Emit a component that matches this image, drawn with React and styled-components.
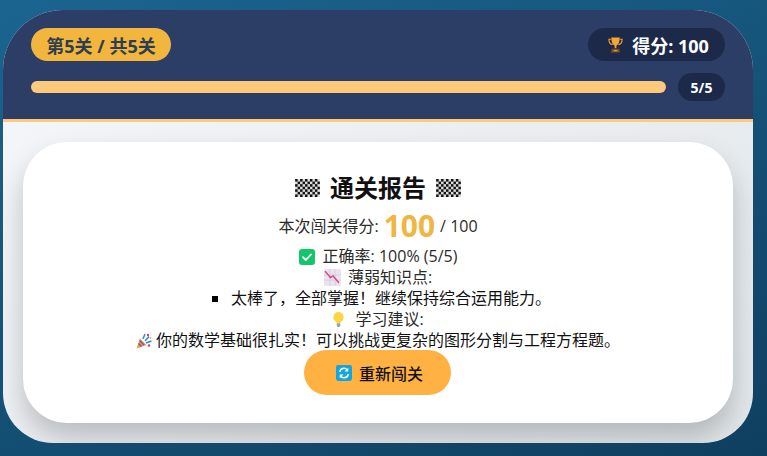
import React from 'react';
import styled, { createGlobalStyle } from 'styled-components';

const GlobalStyle = createGlobalStyle`
  html, body {
    margin: 0;
    padding: 0;
    height: 456px;
    overflow: hidden;
  }
  body {
    background: linear-gradient(160deg, #1a6590 0%, #0f3f60 100%);
    font-family: 'Open Sans', 'Noto Sans CJK SC', sans-serif;
  }
`;

const Page = styled.div`
  height: 456px;
  padding: 10px 14px 13px 3px;
  box-sizing: border-box;
`;

const Panel = styled.div`
  width: 750px;
  height: 433px;
  border-radius: 60px 60px 50px 50px;
  overflow: hidden;
  display: flex;
  flex-direction: column;
  background: linear-gradient(135deg, #f5f7fa 0%, #e2e7ea 100%);
`;

const Header = styled.header`
  flex: none;
  padding: 18px 28px 0;
  height: 91px;
  background: #2c3e66;
  border-bottom: 3px solid #fdc97a;
  display: flex;
  flex-direction: column;
`;

const TopRow = styled.div`
  display: flex;
  justify-content: space-between;
  align-items: center;
  height: 33px;
`;

const LevelBadge = styled.div`
  height: 33px;
  width: 140px;
  border-radius: 17px;
  background: #f2b63f;
  color: #2c3e50;
  font-size: 18px;
  font-weight: 700;
  display: flex;
  align-items: center;
  justify-content: center;
`;

const ScoreBadge = styled.div`
  height: 33px;
  width: 137px;
  box-sizing: border-box;
  padding-left: 4px;
  border-radius: 17px;
  background: #1c2949;
  color: #fff;
  font-size: 18px;
  font-weight: 700;
  display: flex;
  align-items: center;
  justify-content: center;
  gap: 9px;
`;

const ProgressRow = styled.div`
  display: flex;
  align-items: center;
  gap: 12px;
  margin-top: 12px;
`;

const Track = styled.div`
  flex: 1;
  height: 12px;
  border-radius: 6px;
  background: #fdc97a;
`;

const Count = styled.div`
  width: 47px;
  height: 28px;
  border-radius: 14px;
  background: #1c2949;
  color: #fff;
  font-size: 14px;
  font-weight: 700;
  display: flex;
  align-items: center;
  justify-content: center;
`;

const Body = styled.main`
  flex: 1;
  padding: 20px;
  min-height: 0;
`;

const Card = styled.section`
  height: 281px;
  box-sizing: border-box;
  border-radius: 44px;
  background: #fff;
  box-shadow: 0 16px 28px rgba(0, 0, 0, 0.21);
  padding: 28px 20px 0;
  display: flex;
  flex-direction: column;
  align-items: center;
  color: #2b2b2b;
  font-size: 16px;
  line-height: 21px;
`;

const Title = styled.h2`
  margin: 0;
  height: 36px;
  font-size: 24px;
  line-height: 36px;
  font-weight: 700;
  color: #111;
  display: flex;
  align-items: center;
  gap: 10px;
`;

const ScoreLine = styled.div`
  height: 38px;
  display: flex;
  align-items: center;
  gap: 5px;
  margin: 1px 0;
`;

const BigScore = styled.span`
  font-size: 30px;
  font-weight: 700;
  color: #f0b542;
  line-height: 38px;
`;

const Line = styled.div`
  height: 21px;
  display: flex;
  align-items: center;
  justify-content: center;
  gap: ${p => p.$gap ?? 7}px;
  color: ${p => p.$dark ? '#111' : 'inherit'};
`;

const Bullet = styled.span`
  width: 6px;
  height: 6px;
  background: #000;
  margin: 0 13px 0 7px;
`;

const RetryButton = styled.button`
  margin: -1px 0 0 -1px;
  width: 147px;
  height: 45px;
  flex: none;
  border: none;
  border-radius: 23px;
  background: #ffb142;
  color: #111;
  font-family: inherit;
  font-size: 16px;
  font-weight: 500;
  display: flex;
  align-items: center;
  justify-content: center;
  gap: 7px;
  padding: 0 0 0 4px;
`;

const Flag = () => {
  const cells = [];
  for (let r = 0; r < 7; r++) {
    for (let c = 0; c < 10; c++) {
      if ((r + c) % 2 === 0) cells.push(<rect key={`${r}-${c}`} x={c * 2.5} y={r * 2.6} width="2.5" height="2.6" fill="#111" />);
    }
  }
  return (
    <svg width="25" height="18" viewBox="0 0 25 18.200">
      <rect width="25" height="18.200" fill="#ddd" />
      {cells}
    </svg>
  );
};

const Trophy = () => (
  <svg width="15" height="18" viewBox="0 0 16 18">
    <path d="M3 3H1c0 3 1 5 4 5.500M13 3h2c0 3-1 5-4 5.500" fill="none" stroke="#e8952a" strokeWidth="1.300" />
    <path d="M3.500 1h9c0 5-1.500 7.500-3.500 8.500v3H7v-3C5 8.500 3.500 6 3.500 1z" fill="#f4a62e" />
    <path d="M4 13h8l1 4H3z" fill="#7b4a26" />
    <rect x="6" y="14.500" width="4" height="1.200" fill="#e8b04a" />
  </svg>
);

const CheckBox = () => (
  <svg width="16" height="16" viewBox="0 0 16 16">
    <rect width="16" height="16" rx="3" fill="#12c76b" />
    <path d="M4 8.200l2.800 2.800L12 5.500" fill="none" stroke="#fff" strokeWidth="1.800" strokeLinecap="round" strokeLinejoin="round" />
  </svg>
);

const ChartDown = () => (
  <svg width="17" height="17" viewBox="0 0 16 16">
    <rect width="16" height="16" rx="1.500" fill="#e9e2ef" />
    <path d="M0 5.500h16M0 10.500h16M5.500 0v16M10.500 0v16" stroke="#d3cbdc" strokeWidth="0.700" />
    <path d="M1 2l5 6 2.500-1.500L14 13" fill="none" stroke="#d9477f" strokeWidth="1.400" />
  </svg>
);

const Bulb = () => (
  <svg width="13" height="17" viewBox="0 0 14 17">
    <path d="M7 0.500a5.500 5.500 0 0 0-3 10.100c.6.500.8 1.200.9 1.900h4.200c.1-.7.300-1.400.9-1.900A5.500 5.500 0 0 0 7 .5z" fill="#fcd53f" />
    <rect x="5" y="12.500" width="4" height="3" rx="0.800" fill="#9aa3ab" />
    <rect x="6" y="15.500" width="2" height="1" fill="#6f7880" />
  </svg>
);

const Party = () => (
  <svg width="16" height="16" viewBox="0 0 16 16">
    <path d="M0.500 15.500l3.500-10 6.500 6.500z" fill="#e89a30" />
    <path d="M2.500 10.500l3 3M3.500 7.500l4.500 4.500" stroke="#7b4fc0" strokeWidth="1.200" />
    <path d="M7 6l2-5M9 8l4-4.500M10 10l5.500-2" stroke="#2f86e8" strokeWidth="1.500" />
    <circle cx="12" cy="2" r="1.200" fill="#e8355f" />
    <circle cx="14.500" cy="5" r="1" fill="#f0b542" />
    <circle cx="13" cy="12.500" r="1.200" fill="#e8355f" />
  </svg>
);

const Refresh = () => (
  <svg width="16" height="16" viewBox="0 0 15 15">
    <rect width="15" height="15" rx="2" fill="#12a7e0" />
    <path d="M3.500 6.500A4 4 0 0 1 10.500 4.500M11.500 8.500A4 4 0 0 1 4.500 10.500" fill="none" stroke="#fff" strokeWidth="1.500" />
    <path d="M11.500 2.500v3.500H8zM3.500 12.500V9H7z" fill="#fff" />
  </svg>
);

export default function App() {
  return (
    <>
      <GlobalStyle />
      <Page>
        <Panel>
          <Header>
            <TopRow>
              <LevelBadge>第5关 / 共5关</LevelBadge>
              <ScoreBadge><Trophy />得分: 100</ScoreBadge>
            </TopRow>
            <ProgressRow>
              <Track />
              <Count>5/5</Count>
            </ProgressRow>
          </Header>
          <Body>
            <Card>
              <Title><Flag />通关报告<Flag /></Title>
              <ScoreLine>本次闯关得分: <BigScore>100</BigScore> / 100</ScoreLine>
              <Line $gap={8}><CheckBox />正确率: 100% (5/5)</Line>
              <Line><ChartDown />薄弱知识点:</Line>
              <Line $gap={0} $dark><Bullet />太棒了，全部掌握！继续保持综合运用能力。</Line>
              <Line $gap={10}><Bulb />学习建议:</Line>
              <Line $gap={4} $dark><Party />你的数学基础很扎实！可以挑战更复杂的图形分割与工程方程题。</Line>
              <RetryButton><Refresh />重新闯关</RetryButton>
            </Card>
          </Body>
        </Panel>
      </Page>
    </>
  );
}
